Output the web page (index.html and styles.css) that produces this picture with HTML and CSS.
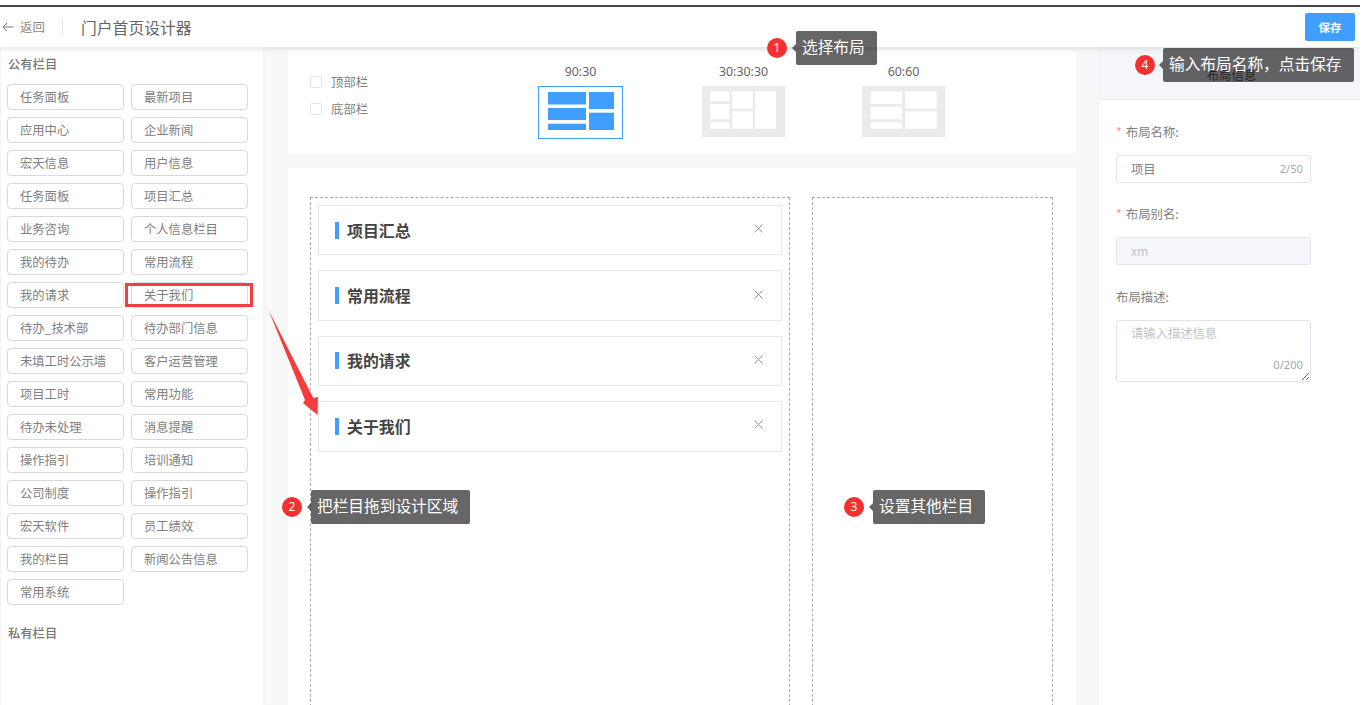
FILE: index.html
```html
<!DOCTYPE html>
<html lang="zh">
<head>
<meta charset="utf-8">
<title>门户首页设计器</title>
<link rel="stylesheet" href="styles.css">
</head>
<body>
<div class="app">
  <header class="topbar">
    <div class="back">
      <svg class="back-icon" width="12" height="10" viewBox="0 0 12 10"><path d="M11.5 5H1M5 1 1 5l4 4" fill="none" stroke="#777" stroke-width="1"/></svg>
      <span>返回</span>
    </div>
    <span class="divider"></span>
    <h1 class="page-title">门户首页设计器</h1>
    <button class="save">保存</button>
  </header>
  <div class="body">
    <aside class="sidebar">
      <h2 class="group-title">公有栏目</h2>
      <div class="chips">
        <div class="chip">任务面板</div><div class="chip">最新项目</div>
        <div class="chip">应用中心</div><div class="chip">企业新闻</div>
        <div class="chip">宏天信息</div><div class="chip">用户信息</div>
        <div class="chip">任务面板</div><div class="chip">项目汇总</div>
        <div class="chip">业务咨询</div><div class="chip">个人信息栏目</div>
        <div class="chip">我的待办</div><div class="chip">常用流程</div>
        <div class="chip">我的请求</div><div class="chip">关于我们</div>
        <div class="chip">待办_技术部</div><div class="chip">待办部门信息</div>
        <div class="chip">未填工时公示墙</div><div class="chip">客户运营管理</div>
        <div class="chip">项目工时</div><div class="chip">常用功能</div>
        <div class="chip">待办未处理</div><div class="chip">消息提醒</div>
        <div class="chip">操作指引</div><div class="chip">培训通知</div>
        <div class="chip">公司制度</div><div class="chip">操作指引</div>
        <div class="chip">宏天软件</div><div class="chip">员工绩效</div>
        <div class="chip">我的栏目</div><div class="chip">新闻公告信息</div>
        <div class="chip">常用系统</div>
      </div>
      <h2 class="group-title group-private">私有栏目</h2>
    </aside>
    <main class="main">
      <section class="layout-card">
        <div class="checks">
          <label class="check"><span class="box"></span>顶部栏</label>
          <label class="check"><span class="box"></span>底部栏</label>
        </div>
        <div class="options">
          <div class="option">
            <div class="option-name">90:30</div>
            <svg class="thumb" width="85" height="53" viewBox="0 0 85 53">
              <rect x=".5" y=".5" width="84" height="52" fill="#fff" stroke="#409eff"/>
              <g fill="#409eff">
                <rect x="10" y="6" width="38" height="12.5"/><rect x="10" y="22" width="38" height="12"/><rect x="10" y="37.7" width="38" height="6.3"/>
                <rect x="51" y="6" width="25" height="17"/><rect x="51" y="26.7" width="25" height="17.3"/>
              </g>
            </svg>
          </div>
          <div class="option">
            <div class="option-name">30:30:30</div>
            <svg class="thumb" width="83" height="51" viewBox="0 0 83 51">
              <rect width="83" height="51" fill="#ebebeb"/>
              <g fill="#fff">
                <rect x="8" y="5.3" width="19.3" height="10"/><rect x="8" y="18" width="19.3" height="15.3"/><rect x="8" y="36.3" width="19.3" height="6.7"/>
                <rect x="30" y="5.3" width="20.7" height="17.4"/><rect x="30" y="25.3" width="20.7" height="17.7"/>
                <rect x="53.3" y="5.3" width="20.7" height="37.7"/>
              </g>
            </svg>
          </div>
          <div class="option">
            <div class="option-name">60:60</div>
            <svg class="thumb" width="83" height="51" viewBox="0 0 83 51">
              <rect width="83" height="51" fill="#ebebeb"/>
              <g fill="#fff">
                <rect x="8.7" y="5.3" width="31.3" height="12.7"/><rect x="8.7" y="20.7" width="31.3" height="12.6"/><rect x="8.7" y="36.3" width="31.3" height="6.7"/>
                <rect x="43" y="5.3" width="31.7" height="17.4"/><rect x="43" y="25.3" width="31.7" height="17.7"/>
              </g>
            </svg>
          </div>
        </div>
      </section>
      <section class="design-card">
        <div class="drop drop-wide">
          <div class="widget"><span class="mark"></span><span class="widget-name">项目汇总</span><svg class="close" width="9" height="9" viewBox="0 0 9 9"><path d="M.5.5l8 8M8.5.5l-8 8" stroke="#999" fill="none"/></svg></div>
          <div class="widget"><span class="mark"></span><span class="widget-name">常用流程</span><svg class="close" width="9" height="9" viewBox="0 0 9 9"><path d="M.5.5l8 8M8.5.5l-8 8" stroke="#999" fill="none"/></svg></div>
          <div class="widget"><span class="mark"></span><span class="widget-name">我的请求</span><svg class="close" width="9" height="9" viewBox="0 0 9 9"><path d="M.5.5l8 8M8.5.5l-8 8" stroke="#999" fill="none"/></svg></div>
          <div class="widget"><span class="mark"></span><span class="widget-name">关于我们</span><svg class="close" width="9" height="9" viewBox="0 0 9 9"><path d="M.5.5l8 8M8.5.5l-8 8" stroke="#999" fill="none"/></svg></div>
        </div>
        <div class="drop drop-narrow"></div>
      </section>
    </main>
    <aside class="panel">
      <div class="panel-head">布局信息</div>
      <form class="form">
        <div class="field field-name">
          <div class="label"><span class="req">*</span>布局名称:</div>
          <div class="control"><input class="input" value="项目"><span class="count">2/50</span></div>
        </div>
        <div class="field field-alias">
          <div class="label"><span class="req">*</span>布局别名:</div>
          <div class="control"><input class="input input-off" value="xm" disabled></div>
        </div>
        <div class="field field-desc">
          <div class="label">布局描述:</div>
          <div class="control"><textarea class="area" placeholder="请输入描述信息"></textarea><span class="count count-area">0/200</span></div>
        </div>
      </form>
    </aside>
  </div>

  <div class="highlight"></div>
  <svg class="arrow" width="52" height="108" viewBox="0 0 52 108"><path d="M.5 1 45.3 89 50 88 49.5 106 35 94 37 91Z" fill="#f53d3d"/></svg>

  <div class="note note-1"><span class="badge">1</span><span class="tip">选择布局</span></div>
  <div class="note note-2"><span class="badge">2</span><span class="tip">把栏目拖到设计区域</span></div>
  <div class="note note-3"><span class="badge">3</span><span class="tip">设置其他栏目</span></div>
  <div class="note note-4"><span class="badge">4</span><span class="tip">输入布局名称，点击保存</span></div>
</div>
</body>
</html>
```
FILE: styles.css
```css
* { box-sizing: border-box; }
html, body { margin: 0; background: #fff; }
body { font-family: "Noto Sans CJK SC", "Noto Sans", sans-serif; color: #777; overflow: hidden; }
.app { position: relative; width: 1360px; height: 705px; padding-top: 5px; display: flex; flex-direction: column; overflow: hidden; }

.topbar { flex: none; height: 42px; border-top: 2px solid #444; background: #fff; display: flex; align-items: center; position: relative; z-index: 2; box-shadow: 0 2px 5px rgba(0,0,0,.1); padding-left: 2px; }
.back { display: flex; align-items: center; gap: 6px; font-size: 12.4px; color: #888; width: 60px; margin-top: -1px; }
.divider { width: 1px; height: 15px; background: #e8e8e8; }
.page-title { margin: 0 0 0 18px; font-size: 15.8px; font-weight: 400; color: #666; }
.save { margin-left: auto; margin-right: 5px; width: 50px; height: 28px; border: 0; border-radius: 2px; background: #409eff; color: #fff; font: 700 11.5px "Noto Sans CJK SC", sans-serif; padding: 0; }

.body { flex: 1; min-height: 0; display: flex; background: #f8f8f8; }

.sidebar { flex: none; width: 263px; background: #fff; padding: 8px 0 0 7px; box-shadow: inset 1px 0 0 #f4f4f4, 0 0 4px rgba(0,0,0,.05); }
.group-title { margin: 0 0 11px 1px; height: 18px; line-height: 18px; font-size: 12.3px; font-weight: 500; color: #777; }
.group-private { margin-top: 19px; }
.chips { display: grid; grid-template-columns: 117px 117px; grid-auto-rows: 26px; gap: 7px; }
.chip { border: 1px solid #d9d9d9; border-radius: 4px; padding-left: 12px; line-height: 24px; font-size: 12.3px; color: #808080; white-space: nowrap; }

.main { flex: none; width: 835px; padding: 3px 22px 0 25px; display: flex; flex-direction: column; gap: 15px; }
.layout-card { flex: none; height: 103px; background: #fff; display: flex; }
.checks { width: 250px; padding: 22px 0 0 22px; display: flex; flex-direction: column; gap: 8px; }
.check { display: flex; align-items: center; height: 19px; font-size: 12.4px; color: #808080; }
.box { width: 12px; height: 12px; border: 1px solid #e3e3ea; border-radius: 2px; margin-right: 9px; }
.options { display: flex; gap: 78px; padding-top: 12px; }
.option { display: flex; flex-direction: column; align-items: center; }
.option:nth-child(2) { margin: 0 -1px 0 1px; }
.option-name { height: 24px; line-height: 19px; font-size: 12.4px; color: #666; font-family: "Noto Sans", sans-serif; white-space: nowrap; }
.thumb { display: block; }

.design-card { flex: 1; background: #fff; padding: 29px 22px 0; display: flex; gap: 22px; }
.drop { border: 1px dashed #aaa; border-bottom: 0; height: 520px; }
.drop-wide { width: 480px; padding: 7px; display: flex; flex-direction: column; gap: 15px; }
.drop-narrow { width: 241px; }
.widget { height: 50.4px; flex: none; border: 1px solid #e6e6e6; display: flex; align-items: center; padding: 0 18px 0 16px; }
.mark { width: 4px; height: 17px; background: #409eff; margin-right: 8px; }
.widget-name { font-size: 15.9px; font-weight: 700; color: #444; }
.close { margin-left: auto; margin-top: -3px; }

.panel { flex: none; width: 262px; background: #fff; border-left: 1px solid #f2f2f2; }
.panel-head { height: 53px; background: #f5f6fa; border-bottom: 1px solid #eceef3; text-align: center; font-size: 12.4px; line-height: 56px; color: #555; padding-left: 4px; }
.form { display: block; padding: 0 50px 0 17px; }
.label { height: 18px; line-height: 18px; font-size: 12.4px; color: #808080; margin-bottom: 14px; }
.req { color: #f88; margin-right: 4px; }
.field-name { padding-top: 23px; }
.field-alias { padding-top: 22px; }
.field-desc { padding-top: 23px; }
.control { position: relative; }
.input { display: block; width: 195px; height: 28px; padding: 0 14px; border: 1px solid #e2e4ec; border-radius: 3px; font: 12.3px "Noto Sans CJK SC", sans-serif; color: #808080; background: #fff; outline: 0; }
.input-off { color: #c0c4cc; background: #f5f7fa; }
.area { display: block; width: 195px; height: 62px; padding: 3px 14px; border: 1px solid #e2e4ec; border-radius: 3px; font: 12.3px/18px "Noto Sans CJK SC", sans-serif; outline: 0; resize: both; }
.area::placeholder { color: #c0c4cc; }
.count { position: absolute; right: 7px; top: 0; line-height: 28px; font-size: 11.2px; color: #a8a8a8; font-family: "Noto Sans", sans-serif; }
.count-area { top: 31px; }

.highlight { position: absolute; left: 125px; top: 283px; width: 128px; height: 24px; border: 3px solid #f33f3f; z-index: 3; }
.arrow { position: absolute; left: 268px; top: 309px; z-index: 3; }

.note { position: absolute; display: flex; align-items: center; z-index: 4; }
.note-1 { left: 767px; top: 31px; }
.note-2 { left: 282px; top: 490px; }
.note-3 { left: 844px; top: 490px; }
.note-4 { left: 1135px; top: 48px; }
.badge { width: 20px; height: 20px; border-radius: 50%; background: #f5302f; color: #fff; font: 400 12px/20px "Noto Sans", sans-serif; text-align: center; }
.tip { position: relative; margin-left: 9px; height: 34px; line-height: 32px; padding: 0 12px 0 6px; background: rgba(0,0,0,.6); border-radius: 2px; color: #fff; font-size: 15.7px; white-space: nowrap; }
.tip::before { content: ""; position: absolute; left: -4px; top: 13px; border: 4px solid transparent; border-left: 0; border-right-color: rgba(0,0,0,.6); }
.note-4 .tip { margin-left: 8px; }
```
